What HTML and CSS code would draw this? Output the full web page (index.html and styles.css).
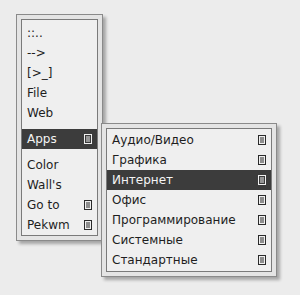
FILE: index.html
```html
<!DOCTYPE html>
<html lang="en">
<head>
    <meta charset="UTF-8">
    <title>pekwm menu</title>
    <link rel="stylesheet" href="styles.css">
</head>
<body>
    <div class="desk">
        <div class="menu main-menu">
            <div class="menu-inner">
                <div class="item">::..</div>
                <div class="item">--&gt;</div>
                <div class="item">[&gt;_]</div>
                <div class="item">File</div>
                <div class="item">Web</div>
                <div class="sep"></div>
                <div class="item active">Apps <span class="sub"><svg width="8" height="10" viewBox="0 0 8 10"><rect x="0.5" y="0.5" width="7" height="9" fill="none" stroke="currentColor"/><path d="M2 3h4M2 5h4M2 7h4" stroke="currentColor"/></svg></span></div>
                <div class="sep"></div>
                <div class="item">Color</div>
                <div class="item">Wall's</div>
                <div class="item">Go to <span class="sub"><svg width="8" height="10" viewBox="0 0 8 10"><rect x="0.5" y="0.5" width="7" height="9" fill="none" stroke="currentColor"/><path d="M2 3h4M2 5h4M2 7h4" stroke="currentColor"/></svg></span></div>
                <div class="item">Pekwm <span class="sub"><svg width="8" height="10" viewBox="0 0 8 10"><rect x="0.5" y="0.5" width="7" height="9" fill="none" stroke="currentColor"/><path d="M2 3h4M2 5h4M2 7h4" stroke="currentColor"/></svg></span></div>
            </div>
        </div>

        <div class="menu apps-menu">
            <div class="menu-inner">
                <div class="item">Аудио/Видео <span class="sub"><svg width="8" height="10" viewBox="0 0 8 10"><rect x="0.5" y="0.5" width="7" height="9" fill="none" stroke="currentColor"/><path d="M2 3h4M2 5h4M2 7h4" stroke="currentColor"/></svg></span></div>
                <div class="item">Графика <span class="sub"><svg width="8" height="10" viewBox="0 0 8 10"><rect x="0.5" y="0.5" width="7" height="9" fill="none" stroke="currentColor"/><path d="M2 3h4M2 5h4M2 7h4" stroke="currentColor"/></svg></span></div>
                <div class="item active">Интернет <span class="sub"><svg width="8" height="10" viewBox="0 0 8 10"><rect x="0.5" y="0.5" width="7" height="9" fill="none" stroke="currentColor"/><path d="M2 3h4M2 5h4M2 7h4" stroke="currentColor"/></svg></span></div>
                <div class="item">Офис <span class="sub"><svg width="8" height="10" viewBox="0 0 8 10"><rect x="0.5" y="0.5" width="7" height="9" fill="none" stroke="currentColor"/><path d="M2 3h4M2 5h4M2 7h4" stroke="currentColor"/></svg></span></div>
                <div class="item">Программирование <span class="sub"><svg width="8" height="10" viewBox="0 0 8 10"><rect x="0.5" y="0.5" width="7" height="9" fill="none" stroke="currentColor"/><path d="M2 3h4M2 5h4M2 7h4" stroke="currentColor"/></svg></span></div>
                <div class="item">Системные <span class="sub"><svg width="8" height="10" viewBox="0 0 8 10"><rect x="0.5" y="0.5" width="7" height="9" fill="none" stroke="currentColor"/><path d="M2 3h4M2 5h4M2 7h4" stroke="currentColor"/></svg></span></div>
                <div class="item">Стандартные <span class="sub"><svg width="8" height="10" viewBox="0 0 8 10"><rect x="0.5" y="0.5" width="7" height="9" fill="none" stroke="currentColor"/><path d="M2 3h4M2 5h4M2 7h4" stroke="currentColor"/></svg></span></div>
            </div>
        </div>
    </div>
</body>
</html>
```

FILE: styles.css
```css
body {
    margin: 0;
    background-color: #ececec;
    font-family: 'DejaVu Sans', sans-serif;
    font-size: 12px;
    color: #1e1e1e;
}

.desk {
    position: relative;
    width: 300px;
    height: 295px;
}

.menu {
    position: absolute;
    border: 1px solid #8a8a8a;
    background-color: #e4e4e4;
    padding: 4px;
    box-shadow: 3px 3px 3px rgba(0,0,0,0.3);
}

.main-menu {
    left: 16px;
    top: 14px;
    width: 77px;
}

.main-menu .menu-inner {
    padding: 3px 0 0;
}

.apps-menu {
    left: 101px;
    top: 123px;
}

.menu-inner {
    border: 1px solid #7a7a7a;
    background-color: #efefef;
    padding: 1px 0;
}

.item {
    height: 20px;
    line-height: 20px;
    padding: 0 5px 0 5px;
    display: flex;
    justify-content: space-between;
    align-items: center;
    white-space: nowrap;
}

.item.active {
    background-color: #3c3c3c;
    color: #f4f4f4;
}

.apps-menu .item {
    gap: 22px;
}

.sub {
    display: flex;
    color: #2a2a2a;
}

.item.active .sub {
    color: #f0f0f0;
}

.sep {
    height: 6px;
}
```
